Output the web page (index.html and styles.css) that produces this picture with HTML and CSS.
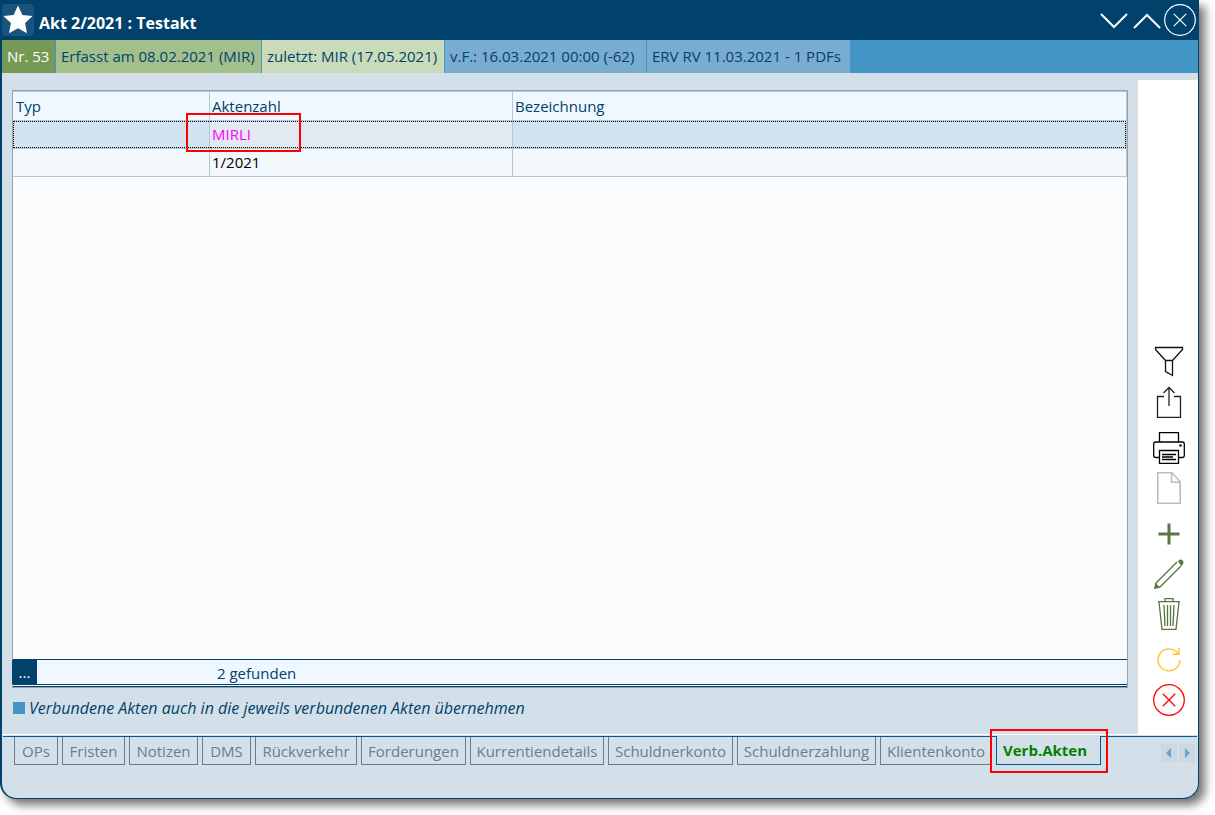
FILE: index.html
```html
<!DOCTYPE html>
<html lang="de">
<head>
<meta charset="utf-8">
<title>Akt 2/2021 : Testakt</title>
<link rel="stylesheet" href="styles.css">
</head>
<body>
<div class="window">
  <header class="titlebar">
    <button class="star" type="button" aria-label="Favorit">
      <svg width="32" height="32" viewBox="0 0 32 32"><path d="M16 1.5l4.4 9.4 10.2 1.2-7.5 7 1.9 10.2L16 24.3 7 29.3l1.9-10.2-7.5-7 10.2-1.2z" fill="#fff"/></svg>
    </button>
    <h1 class="title">Akt 2/2021 : Testakt</h1>
    <div class="window-actions">
      <button type="button" aria-label="Nach unten"><svg width="30" height="32" viewBox="0 0 30 32"><path d="M3 10l13 13 13-13" fill="none" stroke="#fff" stroke-width="2"/></svg></button>
      <button type="button" aria-label="Nach oben"><svg width="30" height="32" viewBox="0 0 30 32"><path d="M3 24l13-13 13 13" fill="none" stroke="#fff" stroke-width="2"/></svg></button>
      <button type="button" aria-label="Fenster schließen"><svg width="32" height="32" viewBox="0 0 32 32"><g fill="none" stroke="#fff" stroke-width="1.2"><circle cx="16" cy="16" r="15.3"/><path d="M9.8 9.8l12.4 12.4M22.2 9.8L9.8 22.2"/></g></svg></button>
    </div>
  </header>

  <div class="status">
    <span class="segment number">Nr. 53</span>
    <span class="segment created">Erfasst am 08.02.2021 (MIR)</span>
    <span class="segment changed">zuletzt: MIR (17.05.2021)</span>
    <span class="segment">v.F.: 16.03.2021 00:00 (-62)</span>
    <span class="segment">ERV RV 11.03.2021 - 1 PDFs</span>
  </div>

  <div class="workspace">
    <main class="content">
      <section class="grid">
        <div class="grid-body">
          <table class="files">
            <colgroup><col class="col-type"><col class="col-number"><col></colgroup>
            <thead><tr><th>Typ</th><th>Aktenzahl</th><th>Bezeichnung</th></tr></thead>
            <tbody>
              <tr class="selected"><td></td><td class="linked">MIRLI<span class="mark mark-cell"></span></td><td></td></tr>
              <tr><td></td><td>1/2021</td><td></td></tr>
            </tbody>
          </table>
        </div>
        <footer class="grid-footer">
          <button class="more" type="button">...</button>
          <span class="count">2 gefunden</span>
        </footer>
      </section>
      <div class="option">
        <input class="check" type="checkbox" id="inherit">
        <label for="inherit">Verbundene Akten auch in die jeweils verbundenen Akten übernehmen</label>
      </div>
    </main>

    <aside class="tools">
      <button type="button" aria-label="Filter"><svg width="32" height="32" viewBox="0 0 32 32"><path d="M2.5 1.500h27v2L19.500 14.500h-7L2.500 3.500zM12.500 14.500v11l7 4v-15" fill="none" stroke="#111" stroke-width="1.300"/></svg></button>
      <button class="gap-8" type="button" aria-label="Exportieren"><svg width="32" height="32" viewBox="0 0 32 32"><path d="M11 10.500H4.500v21h23v-21H21M16 20V1.500M10.500 7L16 1.500 21.500 7" fill="none" stroke="#222" stroke-width="1.300"/></svg></button>
      <button class="gap-14" type="button" aria-label="Drucken"><svg width="32" height="32" viewBox="0 0 32 32"><g fill="none" stroke="#000" stroke-width="1.300"><path d="M6.500 10V.700h19V10M6.500 25.500H2.500q-1.800 0-1.800-1.800V12q0-2 2-2h26.600q2 0 2 2v11.700q0 1.800-1.800 1.800h-4M6.500 18.500h19v12.800h-19zM9 22.500h14M9 25h11M9 27.500h14"/></g><circle cx="27.500" cy="13.500" r="1.200"/></svg></button>
      <button class="gap-8" type="button" aria-label="Neu" disabled><svg width="32" height="32" viewBox="0 0 32 32"><path d="M4.800.800H19l8.200 9v21.400H4.800zM18.500.800v9.500h8.700" fill="none" stroke="#bdbdbd" stroke-width="1.600"/></svg></button>
      <button class="gap-14" type="button" aria-label="Hinzufügen"><svg width="32" height="32" viewBox="0 0 32 32"><path d="M16 5.500v21M5.500 16h21" fill="none" stroke="#587642" stroke-width="3"/></svg></button>
      <button class="gap-8" type="button" aria-label="Bearbeiten"><svg width="32" height="32" viewBox="0 0 32 32"><path d="M3 25L24 4M7 29L28 8M3 25l-1 5 5-1" fill="none" stroke="#587642" stroke-width="1.400"/><path d="M1.500 30.500l1-5.500 4.500 4.200zM25 3q2.500-2.500 4.500-.800T29.500 7l-1.500 1z" fill="#587642"/></svg></button>
      <button class="gap-8" type="button" aria-label="Löschen"><svg width="32" height="32" viewBox="0 0 32 32"><path d="M5 3.700h22M12 3V.700h8V3M6 4l3 27.300h14L26 4M11 7l1 21M14.500 7v21M17.500 7v21M21 7l-1 21" fill="none" stroke="#587642" stroke-width="1.300"/></svg></button>
      <button class="gap-14" type="button" aria-label="Aktualisieren"><svg width="32" height="32" viewBox="0 0 32 32"><path d="M27 16A11 11 0 1 1 22.500 7L26 10M26 4v6.200h-6.500" fill="none" stroke="#fec52e" stroke-width="1.400"/></svg></button>
      <button class="gap-8" type="button" aria-label="Abbrechen"><svg width="32" height="32" viewBox="0 0 32 32"><g fill="none" stroke="#f00" stroke-width="1.300"><circle cx="16" cy="16" r="15.300"/><path d="M9.800 9.800l12.400 12.400M22.200 9.800L9.800 22.200"/></g></svg></button>
    </aside>
  </div>

  <nav class="tabbar">
    <div class="tabs">
      <button class="tab" type="button">OPs</button>
      <button class="tab" type="button">Fristen</button>
      <button class="tab" type="button">Notizen</button>
      <button class="tab" type="button">DMS</button>
      <button class="tab" type="button">Rückverkehr</button>
      <button class="tab" type="button">Forderungen</button>
      <button class="tab" type="button">Kurrentiendetails</button>
      <button class="tab" type="button">Schuldnerkonto</button>
      <button class="tab" type="button">Schuldnerzahlung</button>
      <button class="tab" type="button">Klientenkonto</button>
      <button class="tab active" type="button">Verb.Akten<span class="mark mark-tab"></span></button>
    </div>
    <div class="scrollers">
      <button type="button" aria-label="Zurück"><svg width="16" height="18" viewBox="0 0 16 18"><path d="M10 4v10L5 9z" fill="#66a3cf"/></svg></button>
      <button type="button" aria-label="Weiter"><svg width="16" height="18" viewBox="0 0 16 18"><path d="M6 4v10l5-5z" fill="#66a3cf"/></svg></button>
    </div>
  </nav>
</div>
</body>
</html>
```

FILE: styles.css
```css
* { box-sizing: border-box; }

body {
  margin: 0;
  padding: 0 16px 16px 0;
  height: 100vh;
  background: #fff;
  color: #00426b;
  font: 15px/20px "Open Sans", "Noto Sans", sans-serif;
}

button {
  margin: 0;
  padding: 0;
  border: 0;
  background: none;
  color: inherit;
  font: inherit;
}

svg { display: block; }

.window {
  display: flex;
  flex-direction: column;
  height: 100%;
  overflow: hidden;
  border: solid #00426b;
  border-width: 0 1px 1px 2px;
  border-radius: 0 0 16px 16px;
  background: #d4e0e9;
  box-shadow: 6px 6px 10px rgba(0, 0, 0, 0.55);
}

.titlebar {
  display: flex;
  align-items: center;
  height: 40px;
  flex: none;
  background: #00426b;
  color: #fff;
}

.star { border-radius: 4px; background: #17547f; }

.title {
  margin: 0;
  padding: 6px 0 0 5px;
  font-size: 16px;
  font-weight: 700;
}

.window-actions {
  display: flex;
  align-items: center;
  gap: 3px;
  margin-left: auto;
  padding-right: 2px;
}

.status {
  display: grid;
  grid-template-columns: 53px 205px 182px 201px 203px;
  gap: 1px;
  flex: none;
  background: #4395c6;
}

.segment {
  padding: 6px 5px 7px;
  background: #7aacd1;
  white-space: nowrap;
}

.number { background: #749a55; color: #fff; }
.created { background: #a3bf8c; }
.changed { background: #c9dbb9; }

.workspace {
  display: flex;
  flex: 1;
  gap: 10px;
  min-height: 0;
  border-bottom: 1px solid #fff;
}

.content {
  display: flex;
  flex: 1;
  flex-direction: column;
  padding: 17px 0 16px 10px;
}

.grid {
  display: flex;
  flex: 1;
  flex-direction: column;
  border: 1px solid #a0a0a0;
  background: #fbfcfe;
}

.grid-body { flex: 1; }

.files {
  width: 100%;
  border-top: 1px solid #b1c8d8;
  border-spacing: 0;
  table-layout: fixed;
}

.col-type { width: 197px; }
.col-number { width: 303px; }

.files th,
.files td {
  height: 28px;
  padding: 0 2px;
  border: solid #b1c8d8;
  border-width: 0 1px 1px 0;
  background: #f3f8fc;
  text-align: left;
  font-weight: 400;
}

.files th { height: 29px; background: #f0f8ff; }
.files th:first-child { padding-left: 3px; }
.files td { padding-bottom: 2px; color: #000; }

.files .selected td { position: relative; background: #d0e3f1; }
.files .selected .linked { background: #e2e9f1; color: #f0f; }

/* Focus frame drawn across the cells of the selected row */
.selected td::after {
  content: "";
  position: absolute;
  inset: 0;
  border: dotted #000;
  border-width: 1px 0;
}
.selected td:first-child::after { border-left-width: 1px; }
.selected td:last-child::after { border-right-width: 1px; }

.mark {
  position: absolute;
  z-index: 1;
  border: 2px solid #f00;
  pointer-events: none;
}

.mark-cell { top: -8px; left: -24px; width: 115px; height: 39px; }
.mark-tab { top: -7px; left: -7px; width: 118px; height: 44px; }

.grid-footer {
  display: flex;
  height: 28px;
  flex: none;
  border-top: 1px solid #00426b;
  border-bottom: 3px double #00426b;
  background: #f0f8ff;
}

.more {
  width: 25px;
  margin-left: -1px;
  background: #00426b;
  color: #fff;
}

.count { padding: 3px 0 0 180px; }

.option {
  display: flex;
  align-items: center;
  gap: 4px;
  padding: 10px 0 0 1px;
  font-size: 16px;
  font-style: italic;
}

.check {
  width: 12px;
  height: 12px;
  margin: 0;
  appearance: none;
  background: #4395c6;
}

.tools {
  display: flex;
  flex-direction: column;
  align-items: center;
  justify-content: flex-end;
  width: 60px;
  margin-top: 7px;
  padding: 0 0 18px 2px;
  background: #fff;
}

.gap-8 { margin-top: 8px; }
.gap-14 { margin-top: 14px; }

.tabbar {
  display: flex;
  align-items: flex-start;
  height: 62px;
  flex: none;
  margin: 1px 1px 0;
  border-top: 1px solid #005b96;
}

.tabs {
  display: grid;
  grid-template-columns: 44px 63px 69px 49px 102px 105px 134px 125px 139px 112px 105px;
  gap: 4px;
  padding-left: 11px;
}

.tab {
  height: 28px;
  border: 1px solid #677e8c;
  border-top: 0;
  color: #677e8c;
  white-space: nowrap;
}

.active {
  position: relative;
  height: 29px;
  margin-top: -1px;
  padding-left: 6px;
  border-color: #005b96;
  background: #d4e0e9;
  color: #008000;
  font-weight: 700;
  text-align: left;
}

.scrollers { display: flex; gap: 2px; margin-left: auto; padding: 7px 2px 0 0; }
.scrollers button { background: #cbd8e1; }
```
